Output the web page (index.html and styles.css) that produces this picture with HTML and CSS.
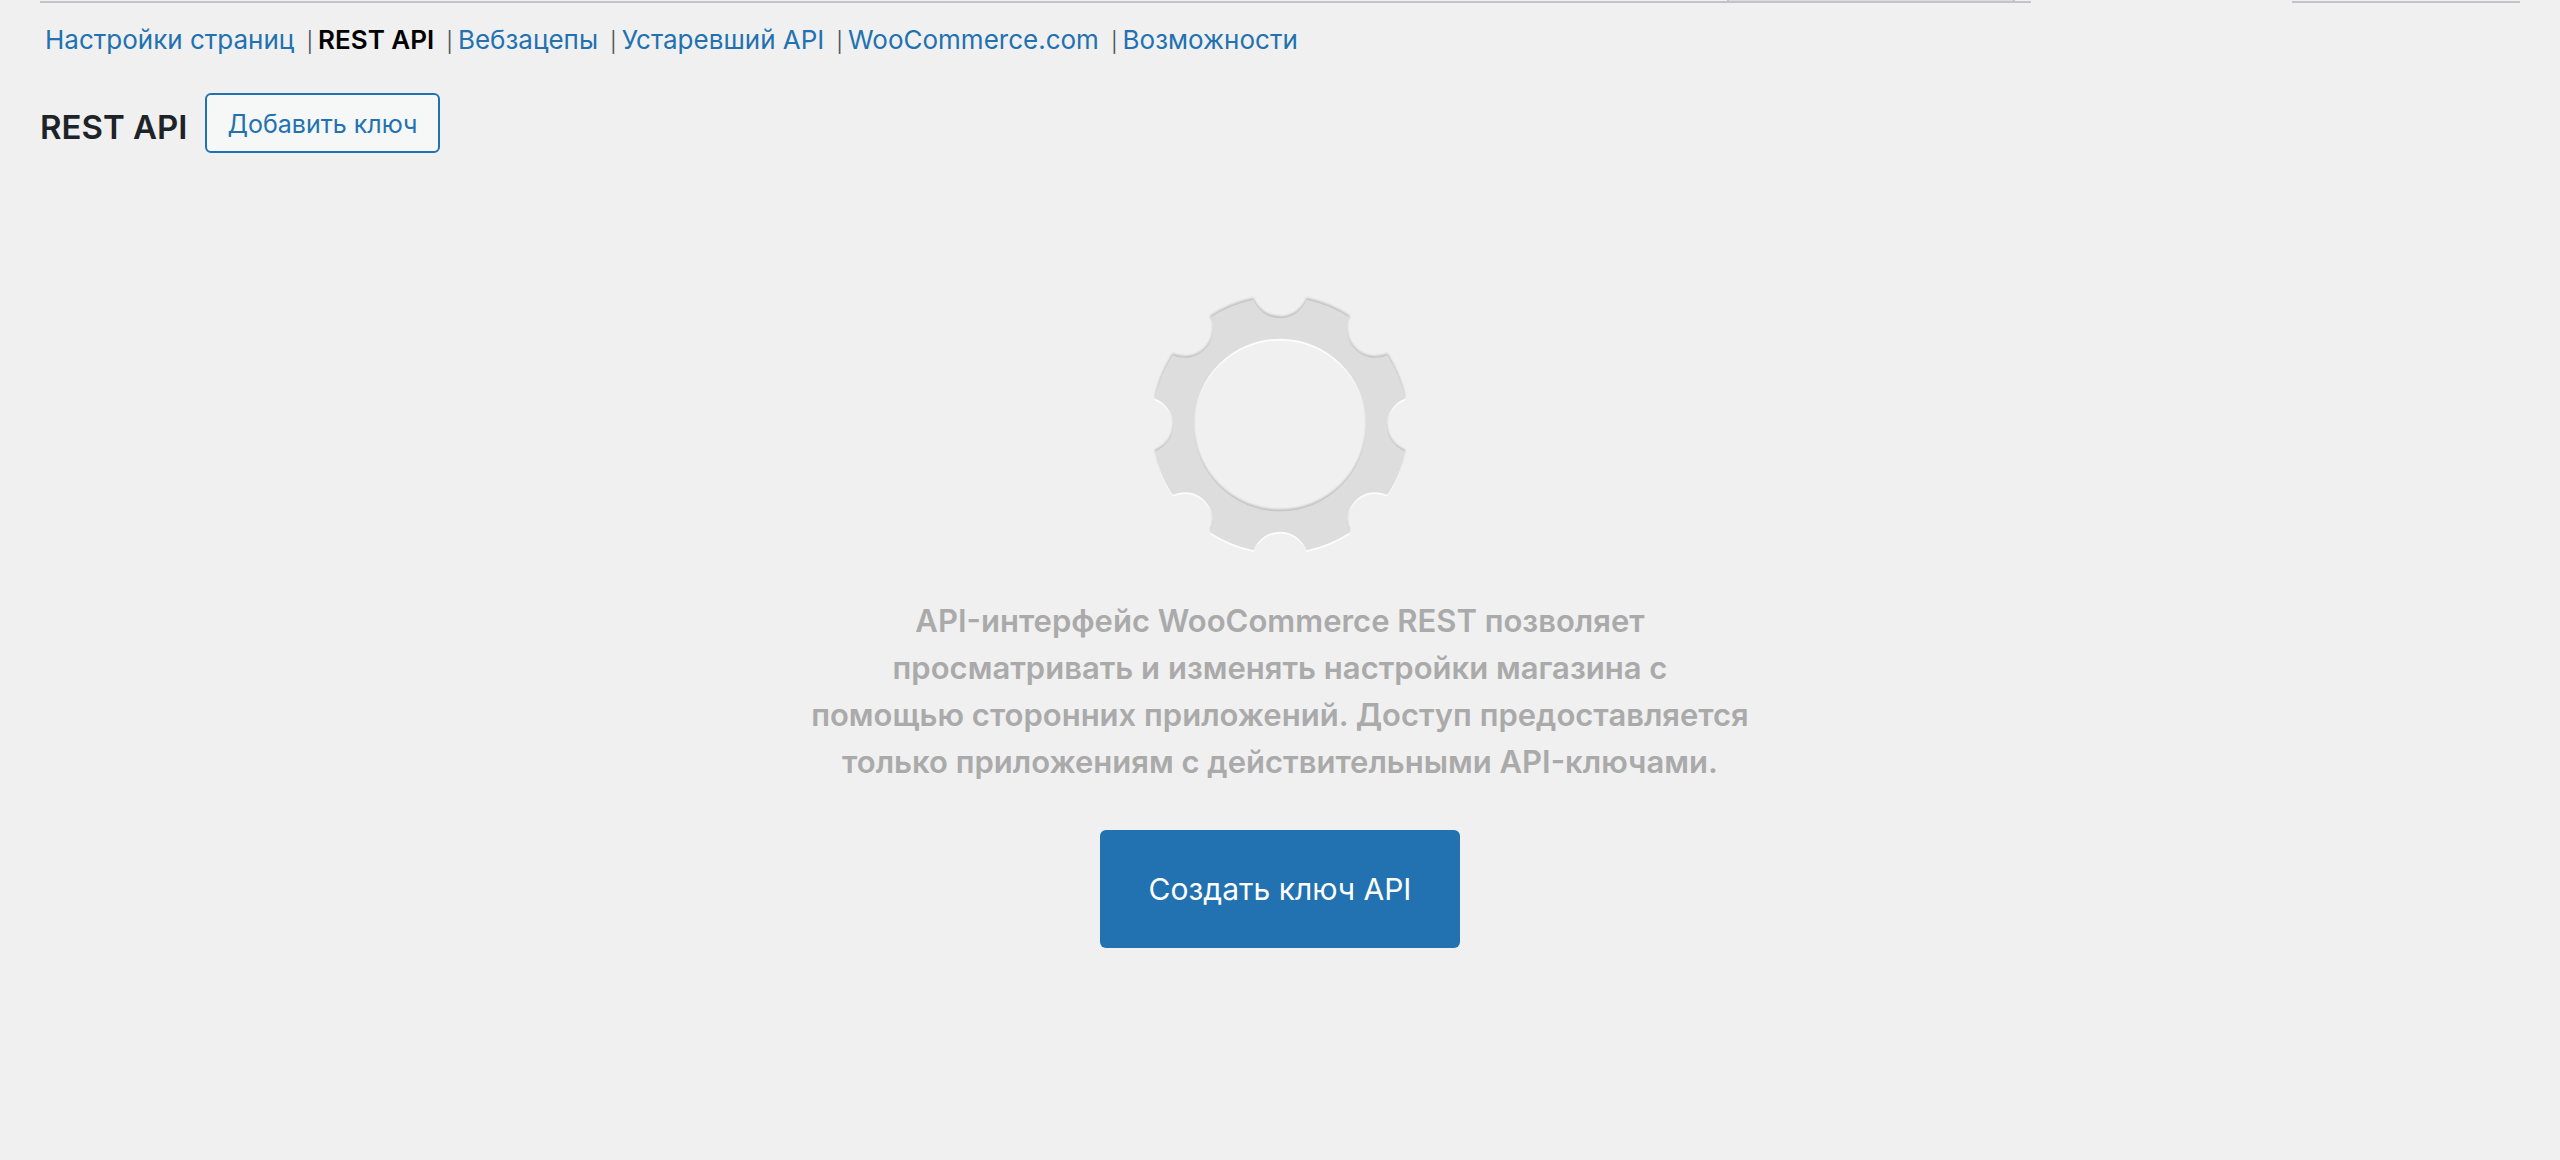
FILE: index.html
```html
<!DOCTYPE html>
<html lang="ru">
<head>
<meta charset="utf-8">
<title>REST API</title>
<link rel="stylesheet" href="styles.css">
</head>
<body>
<div class="panel-edges">
  <div class="edge edge-main"><div class="edge-inset"></div></div>
  <div class="edge edge-side"></div>
</div>
<main class="page">
  <nav>
    <ul class="sections">
      <li><a href="#">Настройки страниц</a><span class="sep">|</span></li>
      <li><a href="#" class="current" aria-current="page">REST API</a><span class="sep">|</span></li>
      <li><a href="#">Вебзацепы</a><span class="sep">|</span></li>
      <li><a href="#">Устаревший API</a><span class="sep">|</span></li>
      <li><a href="#">WooCommerce.com</a><span class="sep">|</span></li>
      <li><a href="#">Возможности</a></li>
    </ul>
  </nav>
  <header class="heading">
    <h1>REST API</h1>
    <a href="#" class="add-key">Добавить ключ</a>
  </header>
  <section class="blank-state">
    <svg class="gear" viewBox="-133 -133 266 266" aria-hidden="true">
      <defs>
        <filter id="soft" x="-10%" y="-10%" width="120%" height="120%"><feGaussianBlur stdDeviation="1"/></filter>
        <path id="cog" fill-rule="evenodd" d="M26.6-126.2A129 129 0 0 1 70.4-108.1A28.3 28.3 0 0 0 108.1-70.4A129 129 0 0 1 126.2-26.6A28.3 28.3 0 0 0 126.2 26.6A129 129 0 0 1 108.1 70.4A28.3 28.3 0 0 0 70.4 108.1A129 129 0 0 1 26.6 126.2A28.3 28.3 0 0 0-26.6 126.2A129 129 0 0 1-70.4 108.1A28.3 28.3 0 0 0-108.1 70.4A129 129 0 0 1-126.2 26.6A28.3 28.3 0 0 0-126.2-26.6A129 129 0 0 1-108.1-70.4A28.3 28.3 0 0 0-70.4-108.1A129 129 0 0 1-26.6-126.2A28.3 28.3 0 0 0 26.6-126.2ZM0-87A87 87 0 1 0 0 87A87 87 0 1 0 0-87Z"/>
      </defs>
      <use href="#cog" y="2" fill="#fff" fill-opacity=".8"/>
      <use href="#cog" y="-2" fill="#000" fill-opacity=".2" filter="url(#soft)"/>
      <use href="#cog" fill="#ddd"/>
    </svg>
    <h2>API-интерфейс WooCommerce REST позволяет<br>просматривать и изменять настройки магазина с<br>помощью сторонних приложений. Доступ предоставляется<br>только приложениям с действительными API-ключами.</h2>
    <a href="#" class="create-key">Создать ключ API</a>
  </section>
</main>
</body>
</html>
```
FILE: styles.css
```css
* { box-sizing: border-box; }
body {
  margin: 0;
  background: #f0f0f0;
  color: #1d2327;
  font: 26px/36px Inter, "Liberation Sans", sans-serif;
}
a { color: #2271b1; text-decoration: none; }
.panel-edges {
  display: flex;
  justify-content: space-between;
  padding: 0 40px;
}
.edge { height: 3px; border-bottom: 2px solid #c3c4c7; }
.edge-main {
  flex: 0 1 1991px;
  display: flex;
  justify-content: flex-end;
  padding-right: 16px;
}
.edge-inset {
  width: 288px;
  height: 1px;
  background: #dcdcde;
  border: solid #c3c4c7;
  border-width: 0 2px;
}
.edge-side { flex: 0 1 228px; }
.page { padding: 19px 40px 40px; }
.sections {
  display: flex;
  flex-wrap: wrap;
  margin: 0;
  padding: 0 5px;
  list-style: none;
}
.sections li { display: flex; align-items: baseline; }
.sections .current { color: #000; font-weight: 600; }
.sep { margin: 0 5px 0 12px; color: #50575e; font-size: 20px; }
.heading {
  display: flex;
  align-items: center;
  gap: 17px;
  margin-top: 33px;
}
h1 { margin: 0; padding-top: 8px; font-size: 33px; line-height: 44px; font-weight: 600; }
.add-key {
  padding: 11px 21px 9px;
  border: 2px solid #2271b1;
  border-radius: 6px;
  background: #f6f7f7;
  font-size: 25px;
}
.blank-state {
  display: flex;
  flex-direction: column;
  align-items: center;
  padding-top: 140px;
}
.gear { width: 264px; height: 264px; }
h2 {
  margin: 40px 0 45px;
  color: #aaa;
  font-size: 31px;
  line-height: 47px;
  font-weight: 600;
  text-align: center;
}
.create-key {
  padding: 36px 49px;
  border-radius: 6px;
  background: #2271b1;
  color: #fff;
  font-size: 30px;
  line-height: 46px;
}
```
